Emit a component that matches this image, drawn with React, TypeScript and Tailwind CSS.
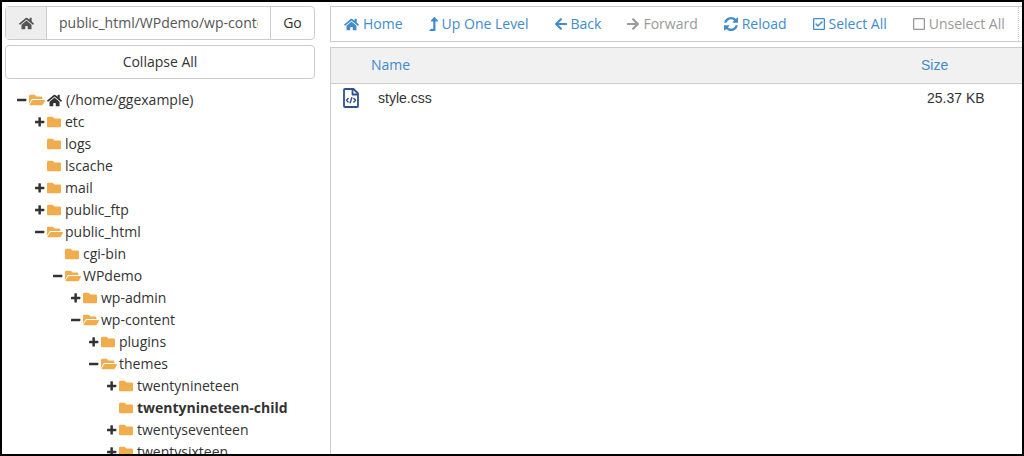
import clsx from "clsx";
import type { ReactNode } from "react";
import {
  FaArrowLeft,
  FaArrowRight,
  FaFolder,
  FaFolderOpen,
  FaHome,
  FaLevelUpAlt,
  FaRegCheckSquare,
  FaRegSquare,
} from "react-icons/fa";

type TreeNode = {
  name: string;
  state?: "open" | "closed";
  root?: boolean;
  active?: boolean;
  children?: TreeNode[];
};

const tree: TreeNode = {
  name: "(/home/ggexample)",
  state: "open",
  root: true,
  children: [
    { name: "etc", state: "closed" },
    { name: "logs" },
    { name: "lscache" },
    { name: "mail", state: "closed" },
    { name: "public_ftp", state: "closed" },
    {
      name: "public_html",
      state: "open",
      children: [
        { name: "cgi-bin" },
        {
          name: "WPdemo",
          state: "open",
          children: [
            { name: "wp-admin", state: "closed" },
            {
              name: "wp-content",
              state: "open",
              children: [
                { name: "plugins", state: "closed" },
                {
                  name: "themes",
                  state: "open",
                  children: [
                    { name: "twentynineteen", state: "closed" },
                    { name: "twentynineteen-child", active: true },
                    { name: "twentyseventeen", state: "closed" },
                    { name: "twentysixteen", state: "closed" },
                  ],
                },
              ],
            },
          ],
        },
      ],
    },
  ],
};

function RefreshIcon() {
  return (
    <svg viewBox="0 0 1536 1536" className="size-[14px]" fill="currentColor" aria-hidden="true">
      <path d="M1511 928q0 5-1 7-64 268-268 434.500T764 1536q-146 0-282.500-55T238 1324l-129 129q-19 19-45 19t-45-19-19-45V960q0-26 19-45t45-19h448q26 0 45 19t19 45-19 45l-137 137q71 66 161 102t187 36q134 0 250-65t186-179q11-17 53-117 8-23 30-23h192q13 0 22.500 9.500t9.500 22.500zm25-800v448q0 26-19 45t-45 19h-448q-26 0-45-19t-19-45 19-45l138-138Q969 256 768 256q-134 0-250 65T332 500q-11 17-53 117-8 23-30 23H50q-13 0-22.500-9.500T18 608v-7q65-268 270-434.500T768 0q146 0 284 55.500T1297 212l130-129q19-19 45-19t45 19 19 45z" />
    </svg>
  );
}

function ToggleIcon({ open }: { open: boolean }) {
  return (
    <svg viewBox="0 0 10 10" className="size-[10px]" fill="currentColor" aria-hidden="true">
      <rect x="0" y="3.700" width="9.300" height="2.500" rx="0.500" />
      {!open && <rect x="3.400" y="0.300" width="2.500" height="9.300" rx="0.500" />}
    </svg>
  );
}

function CodeFileIcon() {
  return (
    <svg
      viewBox="0 0 16 20"
      className="h-5 w-4 text-[#31508c]"
      fill="none"
      stroke="currentColor"
      strokeWidth="1.8"
      strokeLinejoin="round"
      aria-hidden="true"
    >
      <path d="M2 1h8.500L15 5.500V18a1 1 0 0 1-1 1H2a1 1 0 0 1-1-1V2a1 1 0 0 1 1-1z" />
      <path d="M9.500 1v5.500H15" />
      <path d="M5.500 10 3.500 12.300l2 2.200M10.500 10l2 2.300-2 2.200M9 9.300 7 15.200" strokeWidth="1.400" />
    </svg>
  );
}

function FolderRow({ node }: { node: TreeNode }) {
  const open = node.state === "open";
  const Folder = open ? FaFolderOpen : FaFolder;

  return (
    <li>
      <div className="flex h-[22px] items-center whitespace-nowrap">
        <span className="flex w-3 shrink-0">
          {node.state && (
            <button type="button" aria-label={`Toggle ${node.name}`}>
              <ToggleIcon open={open} />
            </button>
          )}
        </span>
        <Folder className={clsx("shrink-0 text-[#f0ad4e]", open ? "size-4" : "mr-0.5 size-[14px]")} />
        <a href="#" className={clsx("ml-0.5 flex items-center gap-1", node.active && "font-bold")}>
          {node.root && <FaHome className="size-[15px]" />}
          {node.name}
        </a>
      </div>
      {node.children && (
        <ul className="pl-[18px]">
          {node.children.map((child) => (
            <FolderRow key={child.name} node={child} />
          ))}
        </ul>
      )}
    </li>
  );
}

function ToolbarButton({ icon, label, disabled }: { icon: ReactNode; label: string; disabled?: boolean }) {
  return (
    <button
      type="button"
      disabled={disabled}
      className="flex shrink-0 items-center gap-1 px-[13px] text-[#428bca] disabled:text-[#999]"
    >
      {icon}
      {label}
    </button>
  );
}

function Sidebar() {
  return (
    <aside className="w-[310px] shrink-0">
      <form className="flex h-[34px] rounded-sm border border-[#ccc]">
        <span className="flex w-[41px] shrink-0 items-center justify-center border-r border-[#ccc] bg-[#eee]">
          <FaHome className="size-[15px] text-[#555]" />
        </span>
        <input
          type="text"
          aria-label="Current path"
          defaultValue="public_html/WPdemo/wp-content/themes"
          className="min-w-0 flex-1 px-3 text-[#555] outline-none"
        />
        <button type="button" className="w-11 shrink-0 border-l border-[#ccc]">
          Go
        </button>
      </form>
      <button type="button" className="mt-[5px] h-[34px] w-full rounded-sm border border-[#ccc]">
        Collapse All
      </button>
      <ul className="mt-[10px] pl-3">
        <FolderRow node={tree} />
      </ul>
    </aside>
  );
}

export default function App() {
  return (
    <div className="flex h-screen gap-[15px] overflow-hidden border-2 border-black bg-white pt-1 pl-[3px] font-['Open_Sans',sans-serif] text-sm leading-5 text-[#333]">
      <Sidebar />
      <main className="flex min-w-0 flex-1 flex-col">
        <nav className="flex h-9 shrink-0 overflow-hidden border border-r-0 border-[#ccc]">
          <div className="flex border-r border-dotted border-[#ccc]">
            <ToolbarButton icon={<FaHome className="size-[15px]" />} label="Home" />
            <ToolbarButton icon={<FaLevelUpAlt className="h-[14px] w-[9px]" />} label="Up One Level" />
            <ToolbarButton icon={<FaArrowLeft className="h-[14px] w-3" />} label="Back" />
            <ToolbarButton icon={<FaArrowRight className="h-[14px] w-3" />} label="Forward" disabled />
            <ToolbarButton icon={<RefreshIcon />} label="Reload" />
            <ToolbarButton icon={<FaRegCheckSquare className="h-[14px] w-3" />} label="Select All" />
            <ToolbarButton icon={<FaRegSquare className="h-[14px] w-3" />} label="Unselect All" disabled />
          </div>
        </nav>
        <div className="mt-[5px] flex-1 border-t border-l border-[#ccc] font-['Liberation_Sans',sans-serif]">
          <table className="w-full table-fixed text-left">
            <thead>
              <tr className="h-[35px] border-b border-[#ccc] bg-[#f1f1f1] text-[#428bca]">
                <th scope="col" className="w-10" aria-label="Type" />
                <th scope="col" className="font-['Open_Sans',sans-serif] font-normal">Name</th>
                <th scope="col" className="w-[101px] font-normal">Size</th>
              </tr>
            </thead>
            <tbody>
              <tr className="h-[30px]">
                <td className="pl-3">
                  <CodeFileIcon />
                </td>
                <td className="pl-[7px]">style.css</td>
                <td className="pl-[6px]">25.37 KB</td>
              </tr>
            </tbody>
          </table>
        </div>
      </main>
    </div>
  );
}
